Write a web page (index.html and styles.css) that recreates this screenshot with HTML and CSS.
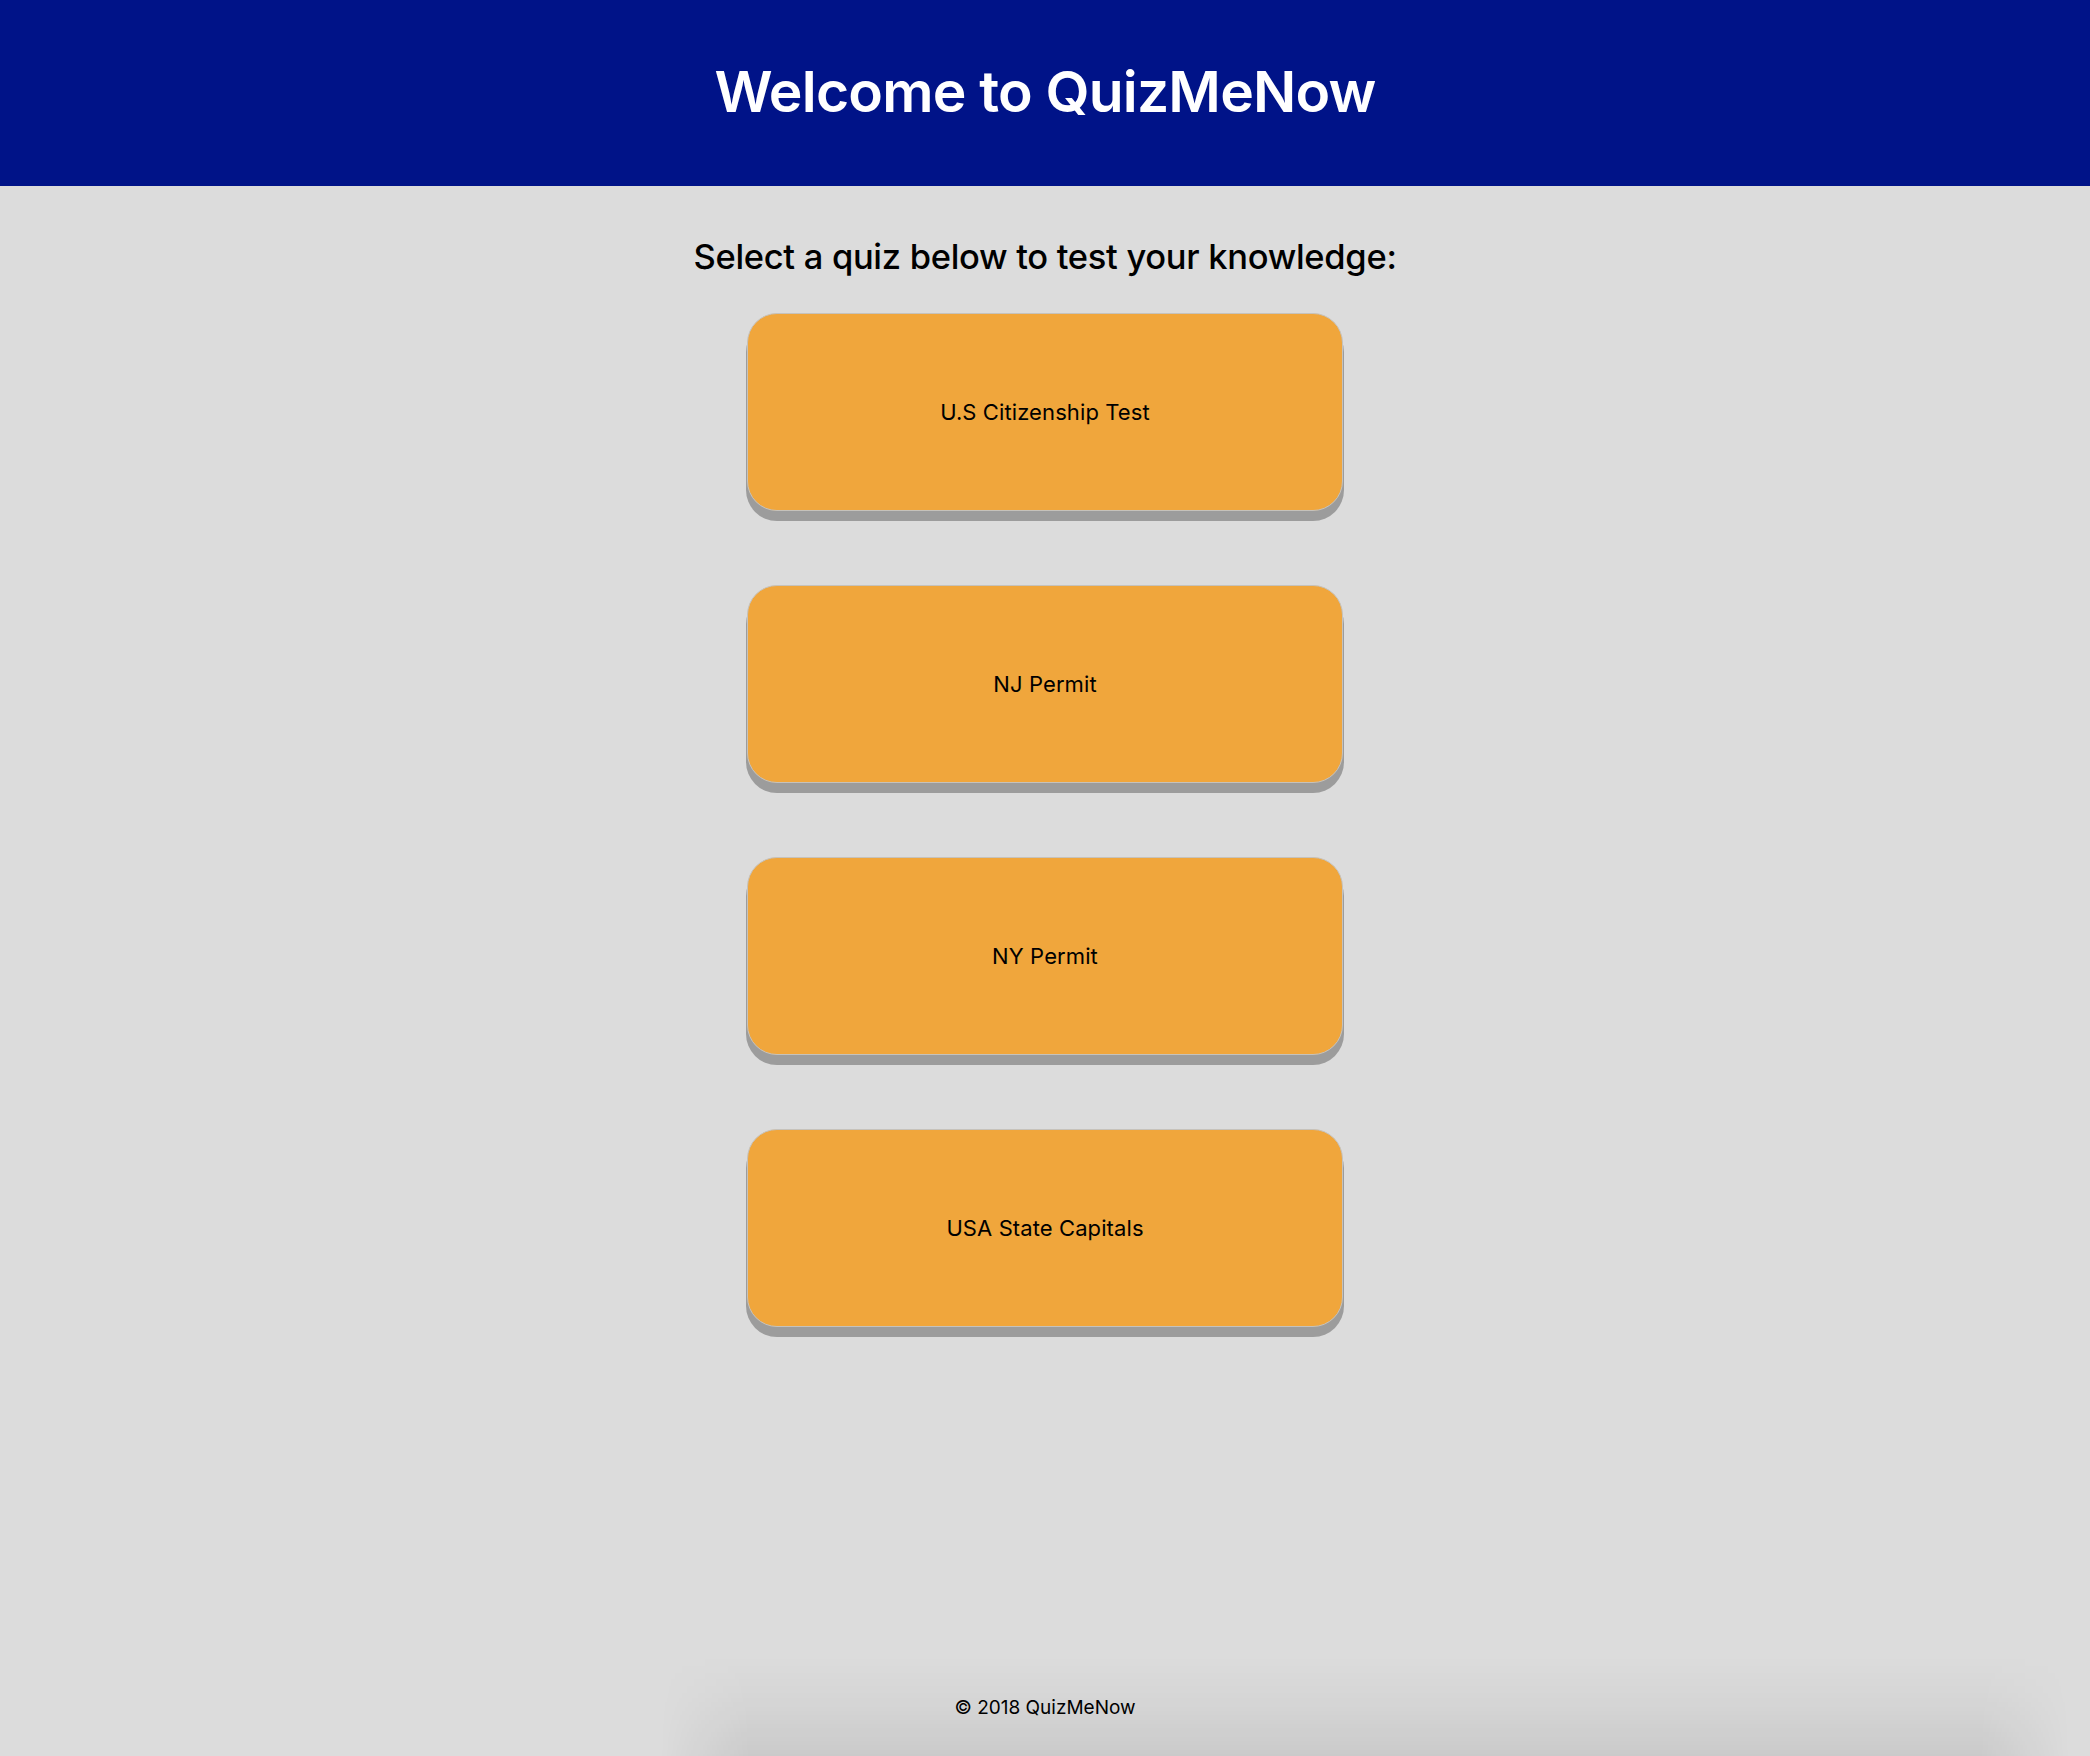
FILE: index.html
```html
<!DOCTYPE html>
<html lang="en">
<head>
<meta charset="utf-8">
<title>QuizMeNow</title>
<link rel="stylesheet" href="styles.css">
</head>
<body>
<header class="site-header">
  <h1 class="site-title">Welcome to QuizMeNow</h1>
</header>
<main class="content">
  <h2 class="prompt">Select a quiz below to test your knowledge:</h2>
  <nav class="quiz-list">
    <a class="quiz-btn" href="#">U.S Citizenship Test</a>
    <a class="quiz-btn" href="#">NJ Permit</a>
    <a class="quiz-btn" href="#">NY Permit</a>
    <a class="quiz-btn" href="#">USA State Capitals</a>
  </nav>
</main>
<footer class="site-footer">
  <span class="footer-text">© 2018 QuizMeNow</span>
</footer>
</body>
</html>
```
FILE: styles.css
```css
html, body {
  margin: 0;
  padding: 0;
}
body {
  background: #dcdcdc;
  font-family: "Inter", "Noto Sans", "Liberation Sans", sans-serif;
  color: #000;
  min-height: 100vh;
  display: flex;
  flex-direction: column;
}
.site-header {
  background: #001388;
  height: 186px;
  display: flex;
  align-items: center;
  justify-content: center;
}
.site-title {
  margin: 0;
  color: #fff;
  font-size: 57px;
  font-weight: 600;
  letter-spacing: -0.8px;
  line-height: 1;
  padding-bottom: 4px;
}
.content {
  flex: 1;
  display: flex;
  flex-direction: column;
  align-items: center;
}
.prompt {
  margin: 51px 0 36px;
  font-size: 34.5px;
  line-height: 40px;
  font-weight: 500;
  letter-spacing: -0.3px;
}
.quiz-list {
  display: flex;
  flex-direction: column;
  gap: 74px;
}
.quiz-btn {
  box-sizing: border-box;
  width: 596px;
  height: 198px;
  display: flex;
  align-items: center;
  justify-content: center;
  background: #f0a63c;
  border: 1px solid #c6c2bb;
  border-radius: 30px;
  box-shadow: 0 9px 0 1px #9c9c9c;
  color: #000;
  text-decoration: none;
  font-size: 22px;
  letter-spacing: 0.1px;
}
.site-footer {
  position: relative;
  height: 100px;
  display: flex;
  justify-content: center;
  align-items: flex-start;
  padding-top: 6px;
  box-sizing: border-box;
}
.site-footer::before {
  content: "";
  position: absolute;
  left: 660px;
  right: 20px;
  top: 0;
  bottom: 0;
  background: linear-gradient(to bottom, rgba(0,0,0,0) 0%, rgba(0,0,0,0.025) 40%, rgba(0,0,0,0.08) 100%);
  -webkit-mask-image: linear-gradient(to right, transparent 0, #000 90px, #000 calc(100% - 90px), transparent 100%);
  mask-image: linear-gradient(to right, transparent 0, #000 90px, #000 calc(100% - 90px), transparent 100%);
}
.footer-text {
  position: relative;
  font-size: 19px;
  line-height: 24px;
  padding-top: 34px;
}
```
